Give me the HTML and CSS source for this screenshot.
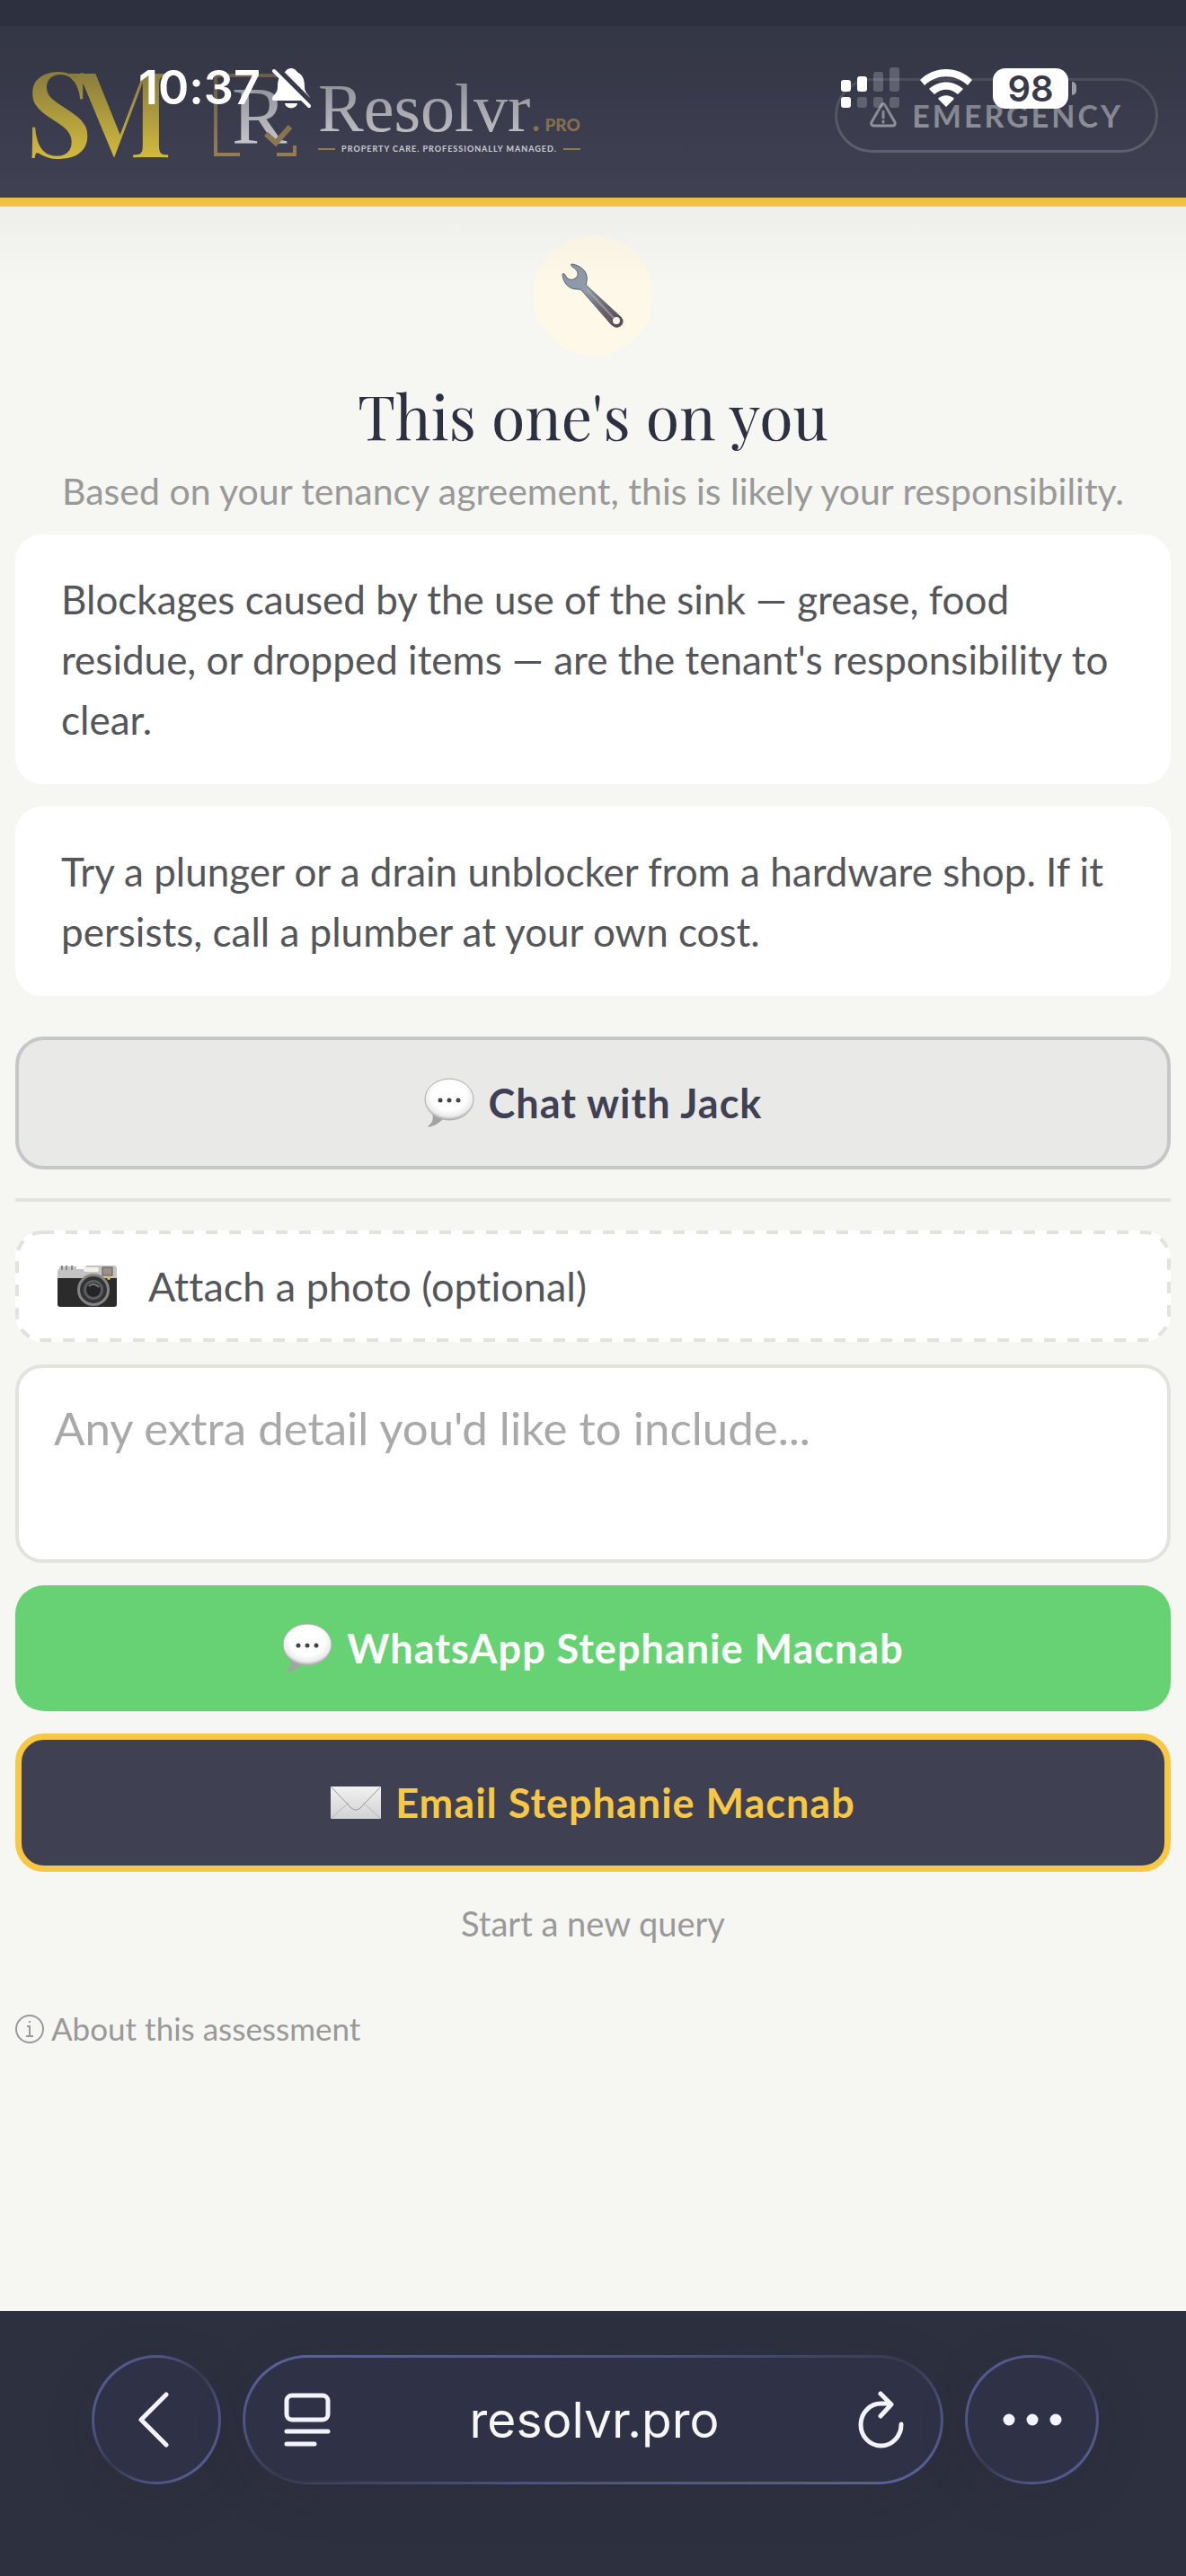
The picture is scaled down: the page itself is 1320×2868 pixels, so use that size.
FILE: index.html
```html
<!DOCTYPE html>
<html lang="en">
<head>
  <meta charset="UTF-8">
  <meta name="viewport" content="width=device-width, initial-scale=1.0">
  <title>Resolvr.pro</title>
  <link rel="stylesheet" href="styles.css">
</head>
<body>
  <!-- shared icons -->
  <svg class="defs" aria-hidden="true">
    <defs>
      <radialGradient id="bubbleFill" cx="50%" cy="42%" r="58%">
        <stop offset="0.6" stop-color="#ffffff"/>
        <stop offset="0.85" stop-color="#ececec"/>
        <stop offset="1" stop-color="#a8a8a8"/>
      </radialGradient>
      <linearGradient id="wrenchFill" x1="0" y1="0" x2="1" y2="1">
        <stop offset="0" stop-color="#8d97a3"/>
        <stop offset="0.4" stop-color="#8f9bab"/>
        <stop offset="0.7" stop-color="#6c6269"/>
        <stop offset="1" stop-color="#51484e"/>
      </linearGradient>
      <linearGradient id="mailFill" x1="0" y1="0" x2="0" y2="1">
        <stop offset="0" stop-color="#f1f1f1"/>
        <stop offset="1" stop-color="#d2d2d2"/>
      </linearGradient>
      <symbol id="bubble" viewBox="0 0 56 56">
        <path d="M9 38 C11 46 9 51 4 54 C5 56 14 53 21 46 Z" fill="#a3a3a3"/>
        <ellipse cx="28" cy="24" rx="27" ry="23" fill="url(#bubbleFill)" stroke="#adadad"/>
        <circle cx="18" cy="25" r="2.5" fill="#444"/>
        <circle cx="28" cy="25" r="2.5" fill="#444"/>
        <circle cx="38" cy="25" r="2.5" fill="#444"/>
      </symbol>
    </defs>
  </svg>

  <header class="header">
    <div class="brand">
      <svg class="logo-sm" viewBox="0 0 160 100" role="img" aria-label="SM">
        <clipPath id="mClip"><path d="M38 0 H170 V100 H92 L57 16 L38 8 Z"/></clipPath>
        <text x="-8" y="97" class="sm-letter">S</text>
        <text x="36" y="97" class="sm-letter" clip-path="url(#mClip)">M</text>
      </svg>
      <svg class="logo-mark" viewBox="0 0 92 92" role="img" aria-label="R">
        <path d="M29 90 H2 V2 H90 V30 M90 80 V90 H70" class="mark-frame"/>
        <text x="20" y="78" class="mark-letter">R</text>
        <path d="M58 67 L69 77 L85 59" class="mark-tick"/>
      </svg>
      <div class="wordmark">
        <div class="wordmark-name">Resolvr<span class="dot">.</span><span class="pro">PRO</span></div>
        <div class="tagline">PROPERTY CARE. PROFESSIONALLY MANAGED.</div>
      </div>
    </div>
    <button class="emergency" type="button">
      <svg class="warn-icon" viewBox="0 0 30 28" aria-hidden="true">
        <path d="M13 3 Q15 0 17 3 L28 22 Q29 26 25 26 H5 Q1 26 2 22 Z"/>
        <path d="M15 10 V17 M15 21 V22"/>
      </svg>
      EMERGENCY
    </button>
  </header>

  <main class="page">
    <div class="result-icon">
      <svg viewBox="0 0 70 72" width="70" height="72" aria-hidden="true">
        <path d="M12 1 C22 3 30 10 28 20 C27 23 27 24 29 26 L66 60 C70 64 68 70 63 71 C60 72 57 70 55 68 L23 31 C21 29 19 29 17 29 C8 29 2 22 1 13 C1 11 3 11 4 13 C6 18 11 20 15 17 C20 14 19 8 12 4 C10 2 10 1 12 1 Z" fill="url(#wrenchFill)" stroke="#5d6068"/>
        <path d="M28 29 L58 61" stroke="#aab4c2" stroke-width="2" opacity="0.6"/>
        <circle cx="61" cy="64" r="4" fill="#fef8e8"/>
      </svg>
    </div>
    <h1>This one's on you</h1>
    <p class="subtitle">Based on your tenancy agreement, this is likely your responsibility.</p>

    <div class="cards">
      <p class="card">Blockages caused by the use of the sink — grease, food residue, or dropped items — are the tenant's responsibility to clear.</p>
      <p class="card">Try a plunger or a drain unblocker from a hardware shop. If it persists, call a plumber at your own cost.</p>
    </div>

    <button class="btn btn-chat" type="button">
      <svg class="bubble" aria-hidden="true"><use href="#bubble"/></svg>
      Chat with Jack
    </button>

    <hr>

    <form class="contact">
      <button class="attach" type="button">
        <svg viewBox="0 0 68 48" width="68" height="48" aria-hidden="true">
          <path d="M3 2 H22 V5 H30 L33 1 H64 Q67 1 67 5 V20 H1 V8 Q1 5 3 5 Z" fill="#c3c3c3"/>
          <path d="M1 15 H67 V44 Q67 47 64 47 H4 Q1 47 1 44 Z" fill="#2b2b2b"/>
          <path d="M6 1 V6 M11 1 V6 M17 1 V6" stroke="#8b8b8b" stroke-width="2"/>
          <rect x="30" y="3" width="17" height="5" rx="2" fill="#f3f0e6"/>
          <rect x="51" y="3" width="11" height="9" fill="#9c9186" stroke="#5f5952"/>
          <circle cx="58" cy="15" r="2" fill="#e5bd35"/>
          <circle cx="41" cy="28" r="18" fill="#858585"/>
          <circle cx="41" cy="28" r="15" fill="#343434"/>
          <circle cx="41" cy="28" r="11" fill="#5b5e61"/>
          <circle cx="41" cy="28" r="8" fill="#242526"/>
          <path d="M36 24 Q41 19 47 25" stroke="#777b80" stroke-width="2" fill="none"/>
        </svg>
        Attach a photo (optional)
      </button>
      <textarea class="detail" name="detail" aria-label="Extra detail" placeholder="Any extra detail you'd like to include..."></textarea>
      <button class="btn btn-whatsapp" type="button">
        <svg class="bubble" aria-hidden="true"><use href="#bubble"/></svg>
        WhatsApp Stephanie Macnab
      </button>
      <button class="btn btn-email" type="button">
        <svg viewBox="0 0 56 36" width="56" height="36" aria-hidden="true">
          <rect width="56" height="36" rx="1" fill="url(#mailFill)"/>
          <path d="M1 35 L20 18 M55 35 L36 18" stroke="#b5b5b5" fill="none"/>
          <path d="M1 1 L23 24 Q28 28 33 24 L55 1" stroke="#969696" fill="none"/>
        </svg>
        Email Stephanie Macnab
      </button>
    </form>

    <button class="link-btn restart" type="button">Start a new query</button>
    <button class="link-btn about" type="button">
      <svg viewBox="0 0 32 32" width="32" height="32" aria-hidden="true">
        <circle cx="16" cy="16" r="15"/>
        <path d="M13 13 H16 V24 M12 24 H20 M16 7 V9"/>
      </svg>
      About this assessment
    </button>
  </main>

  <nav class="browser-bar">
    <button class="glass round" type="button" aria-label="Back">
      <svg viewBox="0 0 42 62" width="42" height="62"><path d="M32 3 L4 31 L32 59" stroke-width="5"/></svg>
    </button>
    <div class="glass address">
      <button class="plain" type="button" aria-label="Page settings">
        <svg viewBox="0 0 52 62" width="52" height="62">
          <rect x="3" y="4" width="46" height="27" rx="6" stroke-width="5"/>
          <path d="M3 44 H49 M3 58 H34" stroke-width="5"/>
        </svg>
      </button>
      <span class="url">resolvr.pro</span>
      <button class="plain" type="button" aria-label="Reload">
        <svg viewBox="0 0 52 64" width="52" height="64">
          <path d="M48 37 A22.5 23.5 0 1 1 26 14 H36 M25 3 L37 15 L25 28" stroke-width="5"/>
        </svg>
      </button>
    </div>
    <button class="glass round more" type="button" aria-label="More">
      <svg viewBox="0 0 66 14" width="66" height="14" class="dots">
        <circle cx="7" cy="7" r="6.5"/><circle cx="33" cy="7" r="6.5"/><circle cx="59" cy="7" r="6.5"/>
      </svg>
    </button>
  </nav>

  <!-- phone status bar, over the page -->
  <div class="status-shade"></div>
  <div class="status-bar">
    <div class="status-left">
      <span class="clock">10:37</span>
      <svg viewBox="0 0 44 46" width="44" height="46" aria-hidden="true">
        <path d="M22 1 C27 1 28 5 30 6 C36 9 37 16 37 22 C37 29 43 31 43 35 Q43 37 40 37 H4 Q1 37 1 35 C1 31 7 29 7 22 C7 16 8 9 14 6 C16 5 17 1 22 1 Z M15 40 H29 C28 47 16 47 15 40 Z" fill="#fff"/>
        <path d="M3 0 L44 41" stroke="#383a49" stroke-width="9"/>
        <path d="M3 4 L42 43" stroke="#fff" stroke-width="4" stroke-linecap="round"/>
      </svg>
    </div>
    <div class="status-right">
      <svg viewBox="0 0 65 46" width="65" height="46" aria-hidden="true">
        <g fill="#fff">
          <rect x="0" y="14" width="11" height="13" rx="3"/>
          <rect x="18" y="10" width="11" height="17" rx="3"/>
          <rect x="0" y="33" width="11" height="12" rx="3"/>
        </g>
        <g fill="#fff" opacity="0.2">
          <rect x="36" y="5" width="11" height="22" rx="3"/>
          <rect x="54" y="0" width="11" height="27" rx="3"/>
          <rect x="18" y="33" width="11" height="12" rx="3"/>
          <rect x="36" y="33" width="11" height="12" rx="3"/>
          <rect x="54" y="33" width="11" height="12" rx="3"/>
        </g>
      </svg>
      <svg viewBox="0 0 58 42" width="58" height="42" fill="#fff" aria-hidden="true">
        <path d="M0 12 C16 -4 42 -4 58 12 L53 18 C39 5 19 5 5 18 Z"/>
        <path d="M10 22 C21 12 37 12 48 22 L42 28 C34 21 24 21 16 28 Z"/>
        <path d="M20 33 C25 28 33 28 38 33 L29 42 Z"/>
      </svg>
      <div class="battery"><span>98</span></div>
    </div>
  </div>
</body>
</html>
```

FILE: styles.css
```css
* { box-sizing: border-box; margin: 0; padding: 0; }
body {
  font-family: Lato, sans-serif;
  font-variant-ligatures: none;
  background: #f6f6f2;
  color: #54565a;
  min-height: 100vh;
  display: flex;
  flex-direction: column;
  position: relative;
}
button {
  font-family: inherit;
  font-variant-ligatures: inherit;
  color: inherit;
  background: none;
  border: none;
  cursor: pointer;
}
.defs {
  position: absolute;
  width: 0;
  height: 0;
}

/* header */
.header {
  display: flex;
  justify-content: space-between;
  align-items: center;
  padding: 78px 31px 42px 36px;
  background: #404254;
  border-bottom: 10px solid #f8c845;
}
.brand {
  display: flex;
  align-items: center;
}
.logo-sm {
  width: 160px;
  height: 100px;
  overflow: visible;
}
.sm-letter {
  font-family: "Playfair Display", "Liberation Serif", serif;
  font-size: 132px;
  font-weight: 600;
  fill: #f2d43d;
}
.logo-mark {
  width: 92px;
  height: 92px;
  margin-left: 42px;
}
.mark-frame,
.mark-tick {
  fill: none;
  stroke: #aa8c58;
  stroke-width: 4;
}
.mark-tick {
  stroke-width: 6;
}
.mark-letter {
  font-family: "Liberation Serif", serif;
  font-size: 92px;
  fill: #f0f0f2;
}
.wordmark {
  margin-left: 24px;
  color: #f0f0f2;
}
.wordmark-name {
  font-family: "Liberation Serif", serif;
  font-size: 76px;
  line-height: 72px;
}
.dot {
  color: #aa8c58;
  font-size: 48px;
  line-height: 1;
}
.pro {
  font-family: Lato, sans-serif;
  font-size: 19px;
  font-weight: 900;
  line-height: 1;
  color: #aa8c58;
  margin-left: 4px;
}
.tagline {
  display: flex;
  align-items: center;
  gap: 7px;
  margin-top: 4px;
  font-size: 9px;
  font-weight: 700;
  line-height: 12px;
  letter-spacing: 1px;
}
.tagline::before,
.tagline::after {
  content: "";
  flex: 1;
  height: 2px;
  background: #aa8c58;
}
.emergency {
  display: flex;
  align-items: center;
  gap: 17px;
  padding: 18px 36px;
  border: 3px solid rgba(255, 255, 255, 0.22);
  border-radius: 42px;
  color: rgba(255, 255, 255, 0.65);
  font-size: 34px;
  font-weight: 700;
  line-height: 41px;
  letter-spacing: 3px;
}
.warn-icon {
  width: 30px;
  height: 28px;
  fill: none;
  stroke: currentColor;
  stroke-width: 3;
  stroke-linecap: round;
}

/* result */
.page {
  flex: 1;
  display: flex;
  flex-direction: column;
  padding: 32px 17px;
}
.result-icon {
  width: 134px;
  height: 134px;
  border-radius: 50%;
  background: #fef8e8;
  align-self: center;
  display: flex;
  align-items: center;
  justify-content: center;
}
h1 {
  font-family: "Playfair Display", "Liberation Serif", serif;
  font-size: 68px;
  font-weight: 400;
  line-height: 84px;
  color: #2d3041;
  text-align: center;
  margin-top: 24px;
}
.subtitle {
  font-size: 41px;
  line-height: 64px;
  color: #999;
  text-align: center;
  margin: 11px 0 16px;
}
.cards {
  display: flex;
  flex-direction: column;
  gap: 25px;
}
.card {
  background: #fff;
  border-radius: 30px;
  padding: 39px 48px 38px 51px;
  font-size: 44px;
  line-height: 67px;
}
.btn {
  display: flex;
  align-items: center;
  justify-content: center;
  gap: 16px;
  width: 100%;
  border-radius: 32px;
  padding: 42px;
  font-size: 45px;
  font-weight: 700;
  line-height: 56px;
  letter-spacing: 1px;
}
.bubble {
  width: 56px;
  height: 56px;
}
.btn-chat {
  margin-top: 45px;
  border: 4px solid #c6c7c9;
  background: #e9e9e7;
  color: #3f4153;
}
hr {
  border: none;
  height: 4px;
  background: #e3e3de;
  margin: 32px 0;
}
.contact {
  display: flex;
  flex-direction: column;
  gap: 25px;
}
.attach {
  display: flex;
  align-items: center;
  gap: 34px;
  padding: 35px 46px;
  border-radius: 30px;
  /* long dashes, wider than the native dashed border */
  background: #fff url("data:image/svg+xml,%3Csvg xmlns='http://www.w3.org/2000/svg'%3E%3Crect width='100%25' height='100%25' rx='30' fill='none' stroke='%23e3e3de' stroke-width='8' stroke-dasharray='13 13'/%3E%3C/svg%3E");
  font-size: 45px;
  line-height: 54px;
}
.detail {
  height: 221px;
  border: 4px solid #e3e3de;
  border-radius: 30px;
  padding: 36px 39px;
  background: #fff;
  color: #54565a;
  font-family: inherit;
  font-size: 51px;
  line-height: 62px;
  resize: none;
}
.detail::placeholder {
  color: #a9a9a9;
}
.btn-whatsapp {
  background: #66d274;
  color: #fff;
}
.btn-email {
  border: 7px solid #f8c845;
  background: #3f4153;
  color: #f8c845;
}
.link-btn {
  color: #999;
}
.restart {
  align-self: center;
  margin-top: 34px;
  font-size: 38px;
  line-height: 47px;
}
.about {
  align-self: flex-start;
  display: flex;
  align-items: center;
  gap: 8px;
  margin-top: 72px;
  font-size: 35px;
  line-height: 43px;
}
.about svg {
  fill: none;
  stroke: #999;
  stroke-width: 2;
}

/* browser toolbar */
.browser-bar {
  display: flex;
  gap: 24px;
  padding: 49px 97px 102px 102px;
  background: #2d303f;
}
.glass {
  height: 144px;
  border: 3px solid transparent;
  border-radius: 72px;
  background:
    linear-gradient(#2f3246, #2f3246) padding-box,
    linear-gradient(to bottom right, #5b639c, #4d5280 30%, #37394e 50%, #4d5280 70%, #5b639c) border-box;
  box-shadow: 0 12px 60px rgba(45, 30, 40, 0.12);
}
.glass svg {
  fill: none;
  stroke: #f2f3fd;
  stroke-linecap: round;
  stroke-linejoin: round;
  display: block;
}
.round {
  width: 144px;
  display: flex;
  align-items: center;
  justify-content: center;
}
.more {
  width: 149px;
}
.glass .dots {
  fill: #f2f3fd;
  stroke: none;
}
.address {
  flex: 1;
  display: flex;
  align-items: center;
  justify-content: space-between;
  padding: 0 40px 0 43px;
}
.url {
  font-family: Inter, sans-serif;
  font-size: 55px;
  line-height: 66px;
  color: #f6f6f4;
}

/* phone status bar */
.status-shade {
  position: absolute;
  top: 0;
  left: 0;
  right: 0;
  height: 320px;
  pointer-events: none;
  background: linear-gradient(#2d303e 29px, rgba(45, 48, 62, 0.66) 29px, rgba(45, 48, 62, 0.5) 90px, rgba(45, 48, 62, 0.18) 170px, rgba(45, 48, 62, 0.04) 228px, rgba(45, 48, 62, 0));
}
.status-bar {
  position: absolute;
  top: 64px;
  left: 0;
  right: 0;
  display: flex;
  justify-content: space-between;
  padding: 0 122px 0 154px;
  color: #fff;
  font-family: Inter, sans-serif;
  pointer-events: none;
}
.status-left,
.status-right {
  display: flex;
  align-items: center;
}
.status-left {
  gap: 12px;
}
.clock {
  font-size: 52px;
  font-weight: 600;
  line-height: 68px;
}
.status-right {
  gap: 23px;
}
.battery {
  display: flex;
  align-items: center;
  gap: 4px;
}
.battery span {
  width: 84px;
  border-radius: 14px;
  background: #fff;
  color: #383a49;
  font-size: 40px;
  font-weight: 600;
  line-height: 45px;
  text-align: center;
}
.battery::after {
  content: "";
  width: 5px;
  height: 15px;
  border-radius: 0 5px 5px 0;
  background: rgba(255, 255, 255, 0.5);
}
```
